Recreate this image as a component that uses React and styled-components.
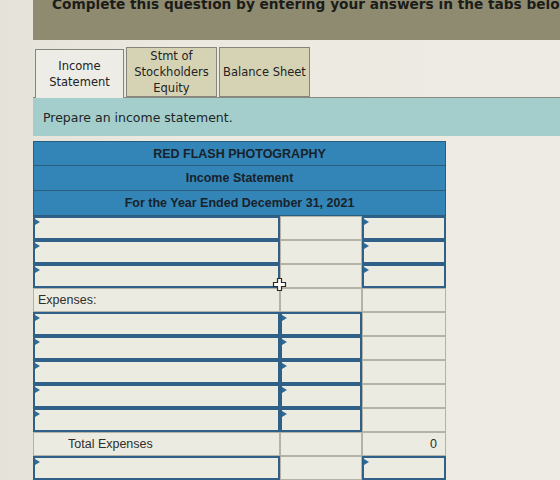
import React from 'react';
import styled, { createGlobalStyle } from 'styled-components';

const GlobalStyle = createGlobalStyle`
  html, body {
    margin: 0;
    padding: 0;
    background: #e9e7de;
    overflow: hidden;
  }
`;

const Page = styled.div`
  width: 560px;
  height: 480px;
  padding-left: 33px;
  box-sizing: border-box;
  display: flex;
  flex-direction: column;
  background: linear-gradient(90deg, #e4e2d9 0%, #ebe9e0 30%, #edebe3 100%);
`;

const Banner = styled.div`
  height: 40px;
  flex: none;
  background: #8e8b70;
  padding-left: 19px;
  overflow: hidden;
  white-space: nowrap;
  font-family: "DejaVu Sans", Verdana, sans-serif;
  font-weight: bold;
  font-size: 13.7px;
  line-height: 15px;
  color: #1c1c18;
`;

const BannerText = styled.div`
  margin-top: -3px;
`;

const TabStrip = styled.div`
  margin-top: 6px;
  height: 51px;
  flex: none;
  display: flex;
  align-items: flex-end;
  gap: 2px;
  padding-left: 2px;
  border-bottom: 1px solid #8a8a82;
`;

const Tab = styled.div`
  width: ${p => p.$width}px;
  height: ${p => (p.$active ? 49 : 50)}px;
  box-sizing: border-box;
  border: 1px solid #86857c;
  border-bottom: ${p => (p.$active ? 'none' : '1px solid #86857c')};
  margin-bottom: ${p => (p.$active ? -1 : 0)}px;
  background: ${p => (p.$active ? '#edece7' : '#d6d3b5')};
  display: flex;
  align-items: center;
  justify-content: center;
  text-align: center;
  font-family: "DejaVu Sans", Verdana, sans-serif;
  font-size: 11.5px;
  line-height: 16px;
  color: #222;
`;

const Prompt = styled.div`
  height: 38px;
  flex: none;
  background: #a3cecb;
  padding-left: 10px;
  display: flex;
  align-items: center;
  font-family: "DejaVu Sans", Verdana, sans-serif;
  font-size: 12.5px;
  color: #222526;
`;

const Sheet = styled.div`
  position: relative;
  margin-top: 5px;
  width: 413px;
  display: grid;
  grid-template-columns: 247px 82px 84px;
  font-family: "Liberation Sans", Arial, sans-serif;
  font-size: 12.5px;
  color: #2e2e2a;
`;

const HeaderRow = styled.div`
  grid-column: 1 / -1;
  height: 25px;
  box-sizing: border-box;
  background: #3385b7;
  border: 1px solid #2a5d7e;
  border-top-width: ${p => (p.$first ? 1 : 0)}px;
  display: flex;
  align-items: center;
  justify-content: center;
  font-weight: bold;
  color: #18222b;
`;

const Cell = styled.div`
  position: relative;
  height: 24px;
  box-sizing: border-box;
  display: flex;
  align-items: center;
  justify-content: ${p => (p.$right ? 'flex-end' : 'flex-start')};
  padding: 0 ${p => (p.$right ? 8 : 0)}px 0 ${p => p.$indent || 0}px;
  background: #ecebe2;
  border: ${p => (p.$input ? '2px solid #2e6088' : '1px solid #b4b2a6')};

  ${p =>
    p.$input &&
    `
    &::before {
      content: '';
      position: absolute;
      left: 0;
      top: 1px;
      border-style: solid;
      border-width: 3px 0 3px 5px;
      border-color: transparent transparent transparent #2e6a98;
    }
  `}
`;

const Cursor = styled.svg`
  position: absolute;
  left: 239px;
  top: 136px;
`;

const rows = [
  ['input', 'plain', 'input'],
  ['input', 'plain', 'input'],
  ['input', 'plain', 'input'],
  [{ text: 'Expenses:', indent: 4 }, 'plain', 'plain'],
  ['input', 'input', 'plain'],
  ['input', 'input', 'plain'],
  ['input', 'input', 'plain'],
  ['input', 'input', 'plain'],
  ['input', 'input', 'plain'],
  [{ text: 'Total Expenses', indent: 34 }, 'plain', { text: '0', right: true }],
  ['input', 'plain', 'input'],
];

function renderCell(cell, key) {
  if (cell === 'input') return <Cell key={key} $input />;
  if (cell === 'plain') return <Cell key={key} />;
  return (
    <Cell key={key} $indent={cell.indent} $right={cell.right}>
      {cell.text}
    </Cell>
  );
}

export default function App() {
  return (
    <Page>
      <GlobalStyle />
      <Banner>
        <BannerText>Complete this question by entering your answers in the tabs below.</BannerText>
      </Banner>
      <TabStrip>
        <Tab $active $width={89}>Income<br />Statement</Tab>
        <Tab $width={91}>Stmt of<br />Stockholders<br />Equity</Tab>
        <Tab $width={91}>Balance Sheet</Tab>
      </TabStrip>
      <Prompt>Prepare an income statement.</Prompt>
      <Sheet>
        <HeaderRow $first>RED FLASH PHOTOGRAPHY</HeaderRow>
        <HeaderRow>Income Statement</HeaderRow>
        <HeaderRow>For the Year Ended December 31, 2021</HeaderRow>
        {rows.map((row, i) => row.map((cell, j) => renderCell(cell, `${i}-${j}`)))}
        <Cursor width="15" height="15" viewBox="0 0 15 15">
          <path
            d="M5.5 1.5h4v4h4v4h-4v4h-4v-4h-4v-4h4z"
            fill="#fbfbf7"
            stroke="#2b2b27"
            strokeWidth="1.2"
          />
        </Cursor>
      </Sheet>
    </Page>
  );
}
